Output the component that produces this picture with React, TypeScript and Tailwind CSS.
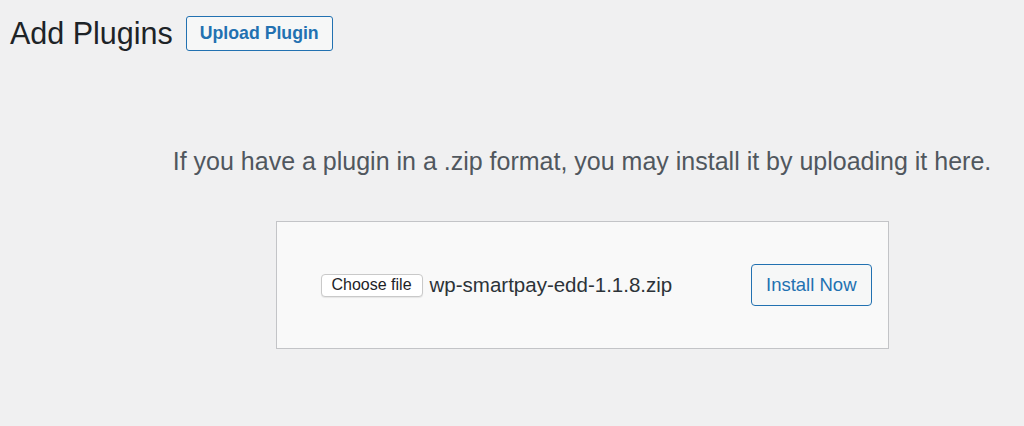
export default function App() {
  return (
    <div className="min-h-[426px] w-[1024px] bg-[#f0f0f1] font-['Liberation_Sans',Arial,sans-serif]">
      {/* Header */}
      <div className="flex items-center pl-[10px] pt-[16px]">
        <h1 className="text-[30.5px] leading-[35px] text-[#1d2327]">Add Plugins</h1>
        <button className="ml-[13px] h-[35px] px-[13px] rounded-[3px] border border-[#2271b1] bg-[#f6f7f7] text-[17.7px] font-bold text-[#2271b1]">
          Upload Plugin
        </button>
      </div>

      {/* Upload area */}
      <div className="flex flex-col items-center pl-[140px] pt-[95px]">
        <p className="text-[25px] leading-[30px] text-[#50575e]">
          If you have a plugin in a .zip format, you may install it by uploading it here.
        </p>
        <div className="mt-[45px] flex h-[128px] w-[613px] items-center border border-[#c3c4c7] bg-[#f9f9f9] pl-[44px] pr-[16px]">
          <div className="flex flex-1 items-center">
            <span className="flex h-[23px] items-center rounded-[4px] border border-[#c9c9c9] bg-white px-[10px] text-[16px] text-[#1d2327] shadow-[0_1px_1px_rgba(0,0,0,0.08)]">
              Choose file
            </span>
            <span className="ml-[7px] text-[20.5px] text-[#2c3338]">wp-smartpay-edd-1.1.8.zip</span>
          </div>
          <button className="h-[42px] rounded-[4px] border border-[#2271b1] bg-[#f6f7f7] px-[14px] text-[18.5px] text-[#2271b1]">
            Install Now
          </button>
        </div>
      </div>
    </div>
  );
}
